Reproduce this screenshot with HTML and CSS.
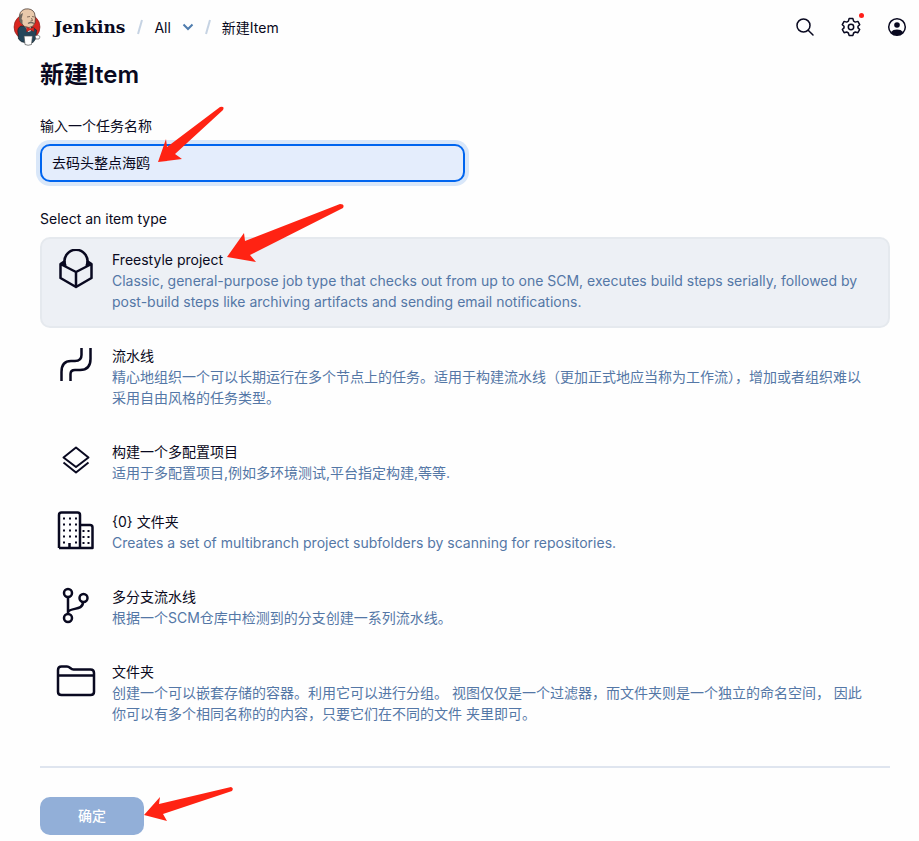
FILE: index.html
```html
<!DOCTYPE html>
<html lang="zh-CN">
<head>
    <meta charset="UTF-8">
    <meta name="viewport" content="width=device-width, initial-scale=1.0">
    <title>新建Item - Jenkins</title>
    <link rel="stylesheet" href="styles.css">
</head>
<body>
    <header class="header">
        <a class="brand" href="#">
            <svg class="brand-logo" viewBox="0 0 28 38" aria-hidden="true">
                <ellipse cx="14" cy="19" rx="13" ry="13" fill="#d9261f" stroke="#7b1f1c" stroke-width="0.6"/>
                <path d="M8 18 Q4 20 5 25 L5.500 31 Q8 34.500 12 34.500 L20 34.500 L22.500 31 L23.500 22 L19 19Z" fill="#25465a" stroke="#16222b" stroke-width="0.7"/>
                <path d="M12 18 L18 19 L18 23 L15 24Z" fill="#fff"/>
                <path d="M6.500 11 Q5.500 3 12 1 Q19 0 21.500 5 Q23 10 22 15 Q20 19.500 16 19.500 Q11 19.500 9 16 Q7 15 6.500 11Z" fill="#e9c9ab" stroke="#3b2d27" stroke-width="0.7"/>
                <path d="M6.500 7 Q5.500 12 8 15 L9.500 16.500 L9.500 12 L8.500 11 L10 5Z" fill="#6e675f"/>
                <path d="M14 9 L17 8.500 M19 8.500 L21.500 9 M18.500 10 L19.500 12.500 L17.500 13" fill="none" stroke="#59453a" stroke-width="0.7"/>
                <path d="M15 15.500 Q18 13.500 21 15.500" fill="none" stroke="#6e675f" stroke-width="1.3"/>
                <path d="M13.500 19 L17 20.500 L21 19 L21 23.500 L17 22 L13.500 24Z" fill="#d9261f" stroke="#6b1c1a" stroke-width="0.4"/>
                <path d="M11 28 L19.500 28 L18.500 36.500 Q15 38 12 36.500Z" fill="#fff" stroke="#4b4f52" stroke-width="0.7"/>
                <path d="M22 28 Q26 26 27 29 Q27 32 23 31Z" fill="#fff" stroke="#4b4f52" stroke-width="0.6"/>
            </svg>
            <span class="brand-name">Jenkins</span>
        </a>
        <nav class="breadcrumbs">
            <svg class="slash" viewBox="0 0 6 16" aria-hidden="true"><path d="M5 1 L1 15"/></svg>
            <a href="#">All</a>
            <button class="chevron" type="button" aria-label="More views">
                <svg viewBox="0 0 12 8" aria-hidden="true"><path d="M1.500 1.500 L6 6 L10.500 1.500"/></svg>
            </button>
            <svg class="slash" viewBox="0 0 6 16" aria-hidden="true"><path d="M5 1 L1 15"/></svg>
            <span>新建Item</span>
        </nav>
        <div class="actions">
            <button type="button" aria-label="Search">
                <svg viewBox="0 0 20 20" aria-hidden="true"><circle cx="8.500" cy="8.500" r="6.500"/><path d="M13.200 13.200 L18 18"/></svg>
            </button>
            <button type="button" aria-label="Manage Jenkins">
                <svg viewBox="0 0 20 20" aria-hidden="true"><circle cx="10" cy="10" r="2.700"/><path d="M8.100 1.600 H11.900 L12.600 4.100 L14.300 5.100 L16.900 4.400 L18.700 7.700 L17 9.300 V10.900 L18.700 12.500 L16.900 15.700 L14.300 15 L12.600 16 L11.900 18.400 H8.100 L7.400 16 L5.700 15 L3.100 15.700 L1.300 12.500 L3 10.900 V9.300 L1.300 7.700 L3.100 4.400 L5.700 5.100 L7.400 4.100Z"/></svg>
                <span class="badge"></span>
            </button>
            <button type="button" aria-label="User">
                <svg viewBox="0 0 20 20" aria-hidden="true"><circle cx="10" cy="10" r="8.300"/><circle class="solid" cx="10" cy="8" r="2.800"/><path class="solid" d="M4 15 Q6 12.600 10 12.600 Q14 12.600 16 15 Q14 18.300 10 18.300 Q6 18.300 4 15Z"/></svg>
            </button>
        </div>
    </header>

    <main class="container">
        <h1>新建Item</h1>
        <form>
            <label class="form-label" for="name">输入一个任务名称</label>
            <input class="name-input" type="text" id="name" value="去码头整点海鸥">

            <fieldset class="items">
                <legend class="form-label">Select an item type</legend>

                <label class="item">
                    <input type="radio" name="mode" checked>
                    <svg class="item-icon" viewBox="0 0 40 40" aria-hidden="true"><path d="M9.500 17 A11.500 11.500 0 1 1 30.500 17"/><path d="M9 12 L4.500 15 V29 L20 38 L35.500 29 V15 L31 12 M4.500 15 L20 23 L35.500 15 M20 23 V38"/><path class="corner" d="M4.500 15 L9 12 V17Z M35.500 15 L31 12 V17Z"/></svg>
                    <span class="item-text">
                        <span class="item-title">Freestyle project</span>
                        <span class="item-desc">Classic, general-purpose job type that checks out from up to one SCM, executes build steps serially, followed by post-build steps like archiving artifacts and sending email notifications.</span>
                    </span>
                </label>

                <label class="item">
                    <input type="radio" name="mode">
                    <svg class="item-icon" viewBox="0 0 40 40" aria-hidden="true"><path d="M5.500 36 V27 Q5.500 16 15 16 H19 Q25.500 16 25.500 10 V3 M14.500 36 V29 Q14.500 25 19 25 H24 Q34.500 25 34.500 14 V3"/></svg>
                    <span class="item-text">
                        <span class="item-title">流水线</span>
                        <span class="item-desc">精心地组织一个可以长期运行在多个节点上的任务。适用于构建流水线（更加正式地应当称为工作流），增加或者组织难以采用自由风格的任务类型。</span>
                    </span>
                </label>

                <label class="item item-compact">
                    <input type="radio" name="mode">
                    <svg class="item-icon thin" viewBox="0 0 40 40" aria-hidden="true"><path d="M20 6.500 L32.500 16.500 L20 26 L7.500 16.500Z M7.500 21.500 L20 31.500 L32.500 21.500"/></svg>
                    <span class="item-text">
                        <span class="item-title">构建一个多配置项目</span>
                        <span class="item-desc">适用于多配置项目,例如多环境测试,平台指定构建,等等.</span>
                    </span>
                </label>

                <label class="item">
                    <input type="radio" name="mode">
                    <svg class="item-icon" viewBox="0 0 40 40" aria-hidden="true"><path d="M3 37 V4 Q3 1.500 5.500 1.500 H21.500 Q24 1.500 24 4 V37 M24 14 H34 Q36.500 14 36.500 16.500 V37 H3 M13.500 32 V37"/><path class="windows" d="M8 6.500 V34 M14 6.500 V30 M20 6.500 V34 M27.500 19 V34 M32.500 19 V34"/></svg>
                    <span class="item-text">
                        <span class="item-title">{0} 文件夹</span>
                        <span class="item-desc">Creates a set of multibranch project subfolders by scanning for repositories.</span>
                    </span>
                </label>

                <label class="item">
                    <input type="radio" name="mode">
                    <svg class="item-icon" viewBox="0 0 40 40" aria-hidden="true"><circle cx="12" cy="7" r="4"/><circle cx="12" cy="32" r="4"/><circle cx="27.500" cy="12" r="4"/><path d="M12 11 V28 M12 26 C15 21 27 25 27 16"/></svg>
                    <span class="item-text">
                        <span class="item-title">多分支流水线</span>
                        <span class="item-desc">根据一个SCM仓库中检测到的分支创建一系列流水线。</span>
                    </span>
                </label>

                <label class="item">
                    <input type="radio" name="mode">
                    <svg class="item-icon" viewBox="0 0 40 40" aria-hidden="true"><path d="M2 31 V9 Q2 5.500 5.500 5.500 H11 C14 5.500 14.500 8.500 17.500 8.500 H34.500 Q38 8.500 38 12 V31 Q38 34 34.500 34 H5.500 Q2 34 2 31Z M2 14.500 H38"/></svg>
                    <span class="item-text">
                        <span class="item-title">文件夹</span>
                        <span class="item-desc">创建一个可以嵌套存储的容器。利用它可以进行分组。 视图仅仅是一个过滤器，而文件夹则是一个独立的命名空间， 因此你可以有多个相同名称的的内容，只要它们在不同的文件 夹里即可。</span>
                    </span>
                </label>
            </fieldset>

            <div class="footer">
                <button class="submit" type="submit">确定</button>
            </div>
        </form>
    </main>

    <svg class="arrows" width="360" height="830" viewBox="0 0 360 830" aria-hidden="true">
        <path d="M158 162 L166 139 L167 147 L220 107 Q225 106 223 110 L175 154 L182 159Z"/>
        <path d="M227 257 L244 233 L245 241 L340 204 Q345 204 343 208 L250 255 L256 262Z"/>
        <path d="M144 815 L160 797 L159 804 L231 787 Q234 788 232 791 L163 814 L167 821Z"/>
    </svg>
</body>
</html>
```

FILE: styles.css
```css
* {
    box-sizing: border-box;
}
body {
    margin: 0;
    position: relative;
    font-family: Inter, "Noto Sans CJK SC", sans-serif;
    font-size: 14px;
    line-height: 21px;
    color: #090920;
    background-color: #fefefe;
}
a {
    color: inherit;
    text-decoration: none;
}
svg {
    display: block;
    fill: none;
}
button {
    font: inherit;
    color: inherit;
    border: none;
    padding: 0;
    background: none;
    cursor: pointer;
}

/* header */
.header {
    display: flex;
    align-items: center;
    height: 54px;
    padding: 0 12px 0 13px;
}
.brand {
    display: flex;
    align-items: center;
    gap: 13px;
}
.brand-logo {
    width: 28px;
    height: 38px;
}
.brand-name {
    font-family: Georgia, "DejaVu Serif", serif;
    font-size: 17px;
    font-weight: bold;
}
.breadcrumbs {
    display: flex;
    align-items: center;
    gap: 11px;
    margin-left: 12px;
}
.slash {
    width: 6px;
    height: 16px;
    stroke: #c6d3e3;
    stroke-width: 2;
}
.chevron svg {
    width: 12px;
    height: 8px;
    stroke: #4f7cae;
    stroke-width: 2;
}
.actions {
    display: flex;
    gap: 26px;
    margin-left: auto;
}
.actions button {
    position: relative;
}
.actions svg {
    width: 20px;
    height: 20px;
    stroke: #090920;
    stroke-width: 1.5px;
    stroke-linejoin: round;
    stroke-linecap: round;
}
.actions .solid {
    fill: #090920;
    stroke: none;
}
.badge {
    position: absolute;
    top: -4px;
    right: -3px;
    width: 5px;
    height: 5px;
    border-radius: 50%;
    background: #ff1f1a;
}

/* form */
.container {
    padding: 0 29px 6px 40px;
}
h1 {
    margin: 0 0 25px;
    padding-top: 6px;
    font-size: 24px;
    line-height: 30px;
    font-weight: 600;
}
.form-label {
    display: block;
    padding: 0;
}
.name-input {
    display: block;
    width: 50%;
    height: 38px;
    margin: 8px 0 26px;
    padding: 0 10px 2px;
    font: inherit;
    color: inherit;
    background: #e4edfc;
    border: 2px solid #0065ef;
    border-radius: 10px;
    box-shadow: 0 0 0 4px #d9e7f9;
    outline: none;
}
.items {
    border: none;
    margin: 0;
    padding: 0;
    min-width: 0;
}
.items legend {
    margin-bottom: 8px;
}
.item {
    display: flex;
    align-items: flex-start;
    gap: 16px;
    margin-bottom: 5px;
    padding: 10px 14px 14px;
    border: 2px solid transparent;
    border-radius: 10px;
    cursor: pointer;
}
.item-compact {
    margin-bottom: 0;
}
.item:has(input:checked) {
    background: #edf0f5;
    border-color: #e5e9ee;
}
.item input {
    appearance: none;
    position: absolute;
    margin: 0;
}
.item-icon {
    flex: none;
    width: 40px;
    height: 40px;
    stroke: #090920;
    stroke-width: 2.5px;
    stroke-linejoin: round;
}
.item-icon.thin {
    stroke-width: 2px;
}
.item-icon .corner {
    fill: #090920;
    stroke-width: 1px;
}
.item-icon .windows {
    stroke-width: 2px;
    stroke-dasharray: 2 4;
}
.item-text {
    flex: 1;
}
.item-title,
.item-desc {
    display: block;
}
.item-desc {
    color: #5477a6;
}
.footer {
    margin-top: 21px;
    padding-top: 29px;
    border-top: 2px solid #dfe5ef;
}
.submit {
    width: 104px;
    height: 38px;
    padding-bottom: 2px;
    border-radius: 10px;
    font-weight: 500;
    color: #fff;
    background: #92afd8;
}

/* red pointers over the form */
.arrows {
    position: absolute;
    top: 0;
    left: 0;
    fill: #ff2313;
    pointer-events: none;
}
```
